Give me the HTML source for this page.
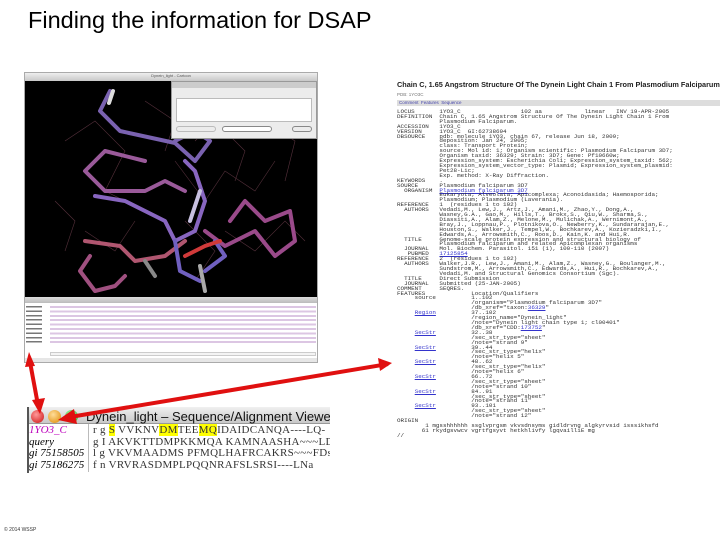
<!DOCTYPE html>
<html><head><meta charset="utf-8"><style>
*{margin:0;padding:0;box-sizing:border-box}
body{width:720px;height:540px;background:#fff;position:relative;overflow:hidden;font-family:"Liberation Sans",sans-serif}
.abs{position:absolute}
#title{left:28px;top:7px;font-size:23.5px;color:#000}
#mono{left:397px;top:110px;width:323px;font-family:"Liberation Mono",monospace;font-size:5.9px;line-height:4.9px;color:#333;white-space:pre}
#mono a{color:#33c;text-decoration:underline}
.al{font-family:"Liberation Serif",serif;font-size:11px;line-height:11.6px;white-space:pre}
</style></head><body>
<div id="title" class="abs">Finding the information for DSAP</div>

<div class="abs" style="left:24px;top:72px;width:294px;height:291px;background:#e6e6e6;border:1px solid #aaa"></div>
<div class="abs" style="left:25px;top:73px;width:292px;height:8px;background:linear-gradient(#eee,#c8c8c8);font-size:4px;text-align:center;color:#555">Dynein_light - Cartoon</div>
<svg class="abs" style="left:25px;top:81px" width="292" height="216" viewBox="0 0 292 216">
<rect width="292" height="216" fill="#000"/>
<g fill="none" stroke="#6a3c4a" stroke-width="0.6" opacity="0.8">
<path d="M40 60 L70 40 L100 70 L80 110 L120 130 M150 80 L180 120 L200 90 L230 110 L250 80 M60 150 L90 170 L110 140 M200 150 L230 170 L260 140 L280 160 M160 140 L190 170 L170 200 M30 120 L50 140 L40 170"/>
<path d="M170 60 L190 40 L220 70 L210 100 M120 20 L150 40 L140 70 M240 40 L270 60 L260 100"/>
</g>
<g fill="none" stroke-width="4" stroke-linejoin="round" stroke-linecap="round">
<path d="M85 10 L75 30 L95 50 L150 62 L170 80 L185 60 L170 50 L150 60" stroke="#7a62b0"/>
<path d="M120 80 L80 70 L60 90 L80 110 L120 110 L140 100 L160 110" stroke="#9a5a9a"/>
<path d="M70 115 L100 120 L140 140 L150 160 L170 150 L180 120 L170 90 L160 80" stroke="#8866c0"/>
<path d="M60 160 L95 165 L110 180 L140 175 L160 160" stroke="#b05670"/>
<path d="M65 175 L55 190 L70 210 L90 205 L100 195" stroke="#a05080"/>
<path d="M180 150 L200 165 L230 150 L250 175 L270 160 L265 130 L240 140 L220 120 L205 140" stroke="#9a4a8a"/>
<path d="M150 160 L155 190 L175 200 M190 160 L200 175 L180 190" stroke="#7060c0"/>
<path d="M160 175 L180 165 L195 160" stroke="#d03a3a"/>
<path d="M175 110 L165 140" stroke="#c8c0e0"/>
<path d="M120 180 L130 195" stroke="#888"/>
<path d="M175 185 L180 210" stroke="#aaa"/>
<path d="M88 10 L84 22" stroke="#ddd"/>
</g>
</svg>
<div class="abs" style="left:171px;top:81px;width:146px;height:58px;background:#ececec;border:1px solid #999">
<div style="height:6px;background:#ccc"></div>
<div style="margin:10px 4px 0;height:24px;background:#fff;border:1px solid #bbb"></div>
<div style="margin:4px 4px 0;display:flex;gap:6px"><div style="width:40px;height:6px;border:1px solid #bbb;border-radius:3px"></div><div style="width:50px;height:6px;border:1px solid #888;border-radius:3px;background:#fff"></div><div style="width:20px;height:6px;border:1px solid #888;border-radius:3px;margin-left:auto"></div></div>
</div>
<div class="abs" style="left:25px;top:297px;width:292px;height:6px;background:linear-gradient(#ddd,#bbb)"></div>
<div class="abs" style="left:25px;top:303px;width:292px;height:55px;background:#fff"></div>
<div class="abs" style="left:50px;top:305px;width:266px;height:40px;background:repeating-linear-gradient(#fff 0 1px,#d8c0e0 1px 3px,#fff 3px 4.4px);opacity:0.9"></div>
<div class="abs" style="left:26px;top:305px;width:16px;height:40px;background:repeating-linear-gradient(#fff 0 1px,#777 1px 2.5px,#fff 2.5px 4.4px)"></div>
<div class="abs" style="left:50px;top:352px;width:266px;height:4px;border:1px solid #ccc;background:#f4f4f4"></div>

<div class="abs" style="left:27px;top:407px;width:303px;height:66px;background:#fff;border-left:2px solid #555;overflow:hidden">
<div class="abs" style="left:0;top:0;width:303px;height:17px;background:linear-gradient(#f0f0f0,#c8c8c8);border-bottom:1px solid #999"></div>
<div class="abs" style="left:2px;top:3px;width:13px;height:13px;border-radius:50%;background:radial-gradient(circle at 40% 35%,#f99,#c11)"></div>
<div class="abs" style="left:19px;top:3px;width:13px;height:13px;border-radius:50%;background:radial-gradient(circle at 40% 35%,#fd9,#d80)"></div>
<div class="abs" style="left:36px;top:3px;width:13px;height:13px;border-radius:50%;background:radial-gradient(circle at 40% 35%,#afa,#2a2)"></div>
<div class="abs" style="left:57px;top:2px;font-size:13px;color:#111;white-space:nowrap">Dynein_light – Sequence/Alignment Viewer</div>
<div class="abs al" style="left:0px;top:18px;font-style:italic"><span style="color:#b0b">1YO3_C</span>
query
gi 75158505
gi 75186275</div>
<div class="abs" style="left:59px;top:17px;width:1px;height:48px;background:#bbb"></div>
<div class="abs al" style="left:64px;top:18px;letter-spacing:0.3px;color:#333">r g <span style="background:#ff0">S</span> VVKNV<span style="background:#ff0">DM</span>TEE<span style="background:#ff0">MQ</span>IDAIDCANQA----LQ-
g I AKVKTTDMPKKMQA KAMNAASHA~~~LD~
l g VKVMAADMS PFMQLHAFRCAKRS~~~FDs
f n VRVRASDMPLPQQNRAFSLSRSI----LNa</div>
</div>

<div class="abs" style="left:397px;top:80px;font-size:7.3px;font-weight:bold;color:#222;white-space:nowrap">Chain C, 1.65 Angstrom Structure Of The Dynein Light Chain 1 From Plasmodium Falciparum</div>
<div class="abs" style="left:397px;top:92px;font-size:4.5px;color:#777">PDB: 1YO3C</div>
<div class="abs" style="left:397px;top:100px;width:323px;height:6px;background:#ddd;font-size:4.5px;color:#44a;padding-left:2px">Comment &nbsp;Features &nbsp;Sequence</div>
<div id="mono" class="abs">LOCUS       1YO3_C                 102 aa            linear   INV 19-APR-2005
DEFINITION  Chain C, 1.65 Angstrom Structure Of The Dynein Light Chain 1 From
            Plasmodium Falciparum.
ACCESSION   1YO3_C
VERSION     1YO3_C  GI:62738694
DBSOURCE    pdb: molecule 1YO3, chain 67, release Jun 18, 2009;
            deposition: Jan 24, 2005;
            class: Transport Protein;
            source: Mol id: 1; Organism scientific: Plasmodium Falciparum 3D7;
            Organism taxid: 36329; Strain: 3D7; Gene: Pf10660w;
            Expression_system: Escherichia Coli; Expression_system_taxid: 562;
            Expression_system_vector_type: Plasmid; Expression_system_plasmid:
            Pet28-Lic;
            Exp. method: X-Ray Diffraction.
KEYWORDS    .
SOURCE      Plasmodium falciparum 3D7
  ORGANISM  <a>Plasmodium falciparum 3D7</a>
            Eukaryota; Alveolata; Apicomplexa; Aconoidasida; Haemosporida;
            Plasmodium; Plasmodium (Laverania).
REFERENCE   1  (residues 1 to 102)
  AUTHORS   Vedadi,M., Lew,J., Artz,J., Amani,M., Zhao,Y., Dong,A.,
            Wasney,G.A., Gao,M., Hills,T., Brokx,S., Qiu,W., Sharma,S.,
            Diassiti,A., Alam,Z., Melone,M., Mulichak,A., Wernimont,A.,
            Bray,J., Loppnau,P., Plotnikova,O., Newberry,K., Sundararajan,E.,
            Houston,S., Walker,J., Tempel,W., Bochkarev,A., Kozieradzki,I.,
            Edwards,A., Arrowsmith,C., Roos,D., Kain,K. and Hui,R.
  TITLE     Genome-scale protein expression and structural biology of
            Plasmodium falciparum and related Apicomplexan organisms
  JOURNAL   Mol. Biochem. Parasitol. 151 (1), 100-110 (2007)
   PUBMED   <a>17125854</a>
REFERENCE   2  (residues 1 to 102)
  AUTHORS   Walker,J.R., Lew,J., Amani,M., Alam,Z., Wasney,G., Boulanger,M.,
            Sundstrom,M., Arrowsmith,C., Edwards,A., Hui,R., Bochkarev,A.,
            Vedadi,M. and Structural Genomics Consortium (Sgc).
  TITLE     Direct Submission
  JOURNAL   Submitted (25-JAN-2005)
COMMENT     SEQRES.
FEATURES             Location/Qualifiers
     source          1..102
                     /organism="Plasmodium falciparum 3D7"
                     /db_xref="taxon:<a>36329</a>"
     <a>Region</a>          37..102
                     /region_name="Dynein_light"
                     /note="Dynein light chain type 1; cl00401"
                     /db_xref="CDD:<a>173752</a>"
     <a>SecStr</a>          32..38
                     /sec_str_type="sheet"
                     /note="strand 9"
     <a>SecStr</a>          39..44
                     /sec_str_type="helix"
                     /note="helix 5"
     <a>SecStr</a>          48..62
                     /sec_str_type="helix"
                     /note="helix 6"
     <a>SecStr</a>          66..72
                     /sec_str_type="sheet"
                     /note="strand 10"
     <a>SecStr</a>          84..91
                     /sec_str_type="sheet"
                     /note="strand 11"
     <a>SecStr</a>          93..101
                     /sec_str_type="sheet"
                     /note="strand 12"
ORIGIN
        1 mgsshhhhhh ssglvprgsm vkvsdnsyms gidldrvng algkyrvsid isssikhsfd
       61 rkydgsvwcv vgrtfgsyvt hetkhlivfy lgqvailliE mg
//</div>

<svg class="abs" style="left:0;top:0" width="720" height="540">
<g stroke="#e01010" stroke-width="4" fill="#e01010">
<line x1="30" y1="362" x2="38" y2="405"/>
<polygon points="32,400 45,398 40,414" stroke="none"/>
<polygon points="25,367 35,366 29,352" stroke="none"/>
<line x1="388" y1="364" x2="70" y2="417"/>
<polygon points="58,420 74,409 77,424" stroke="none"/>
<polygon points="392,363 378,358 380,371" stroke="none"/>
</g>
</svg>
<div class="abs" style="left:4px;top:527px;font-size:5px;color:#333">© 2014 WSSP</div>
</body></html>
